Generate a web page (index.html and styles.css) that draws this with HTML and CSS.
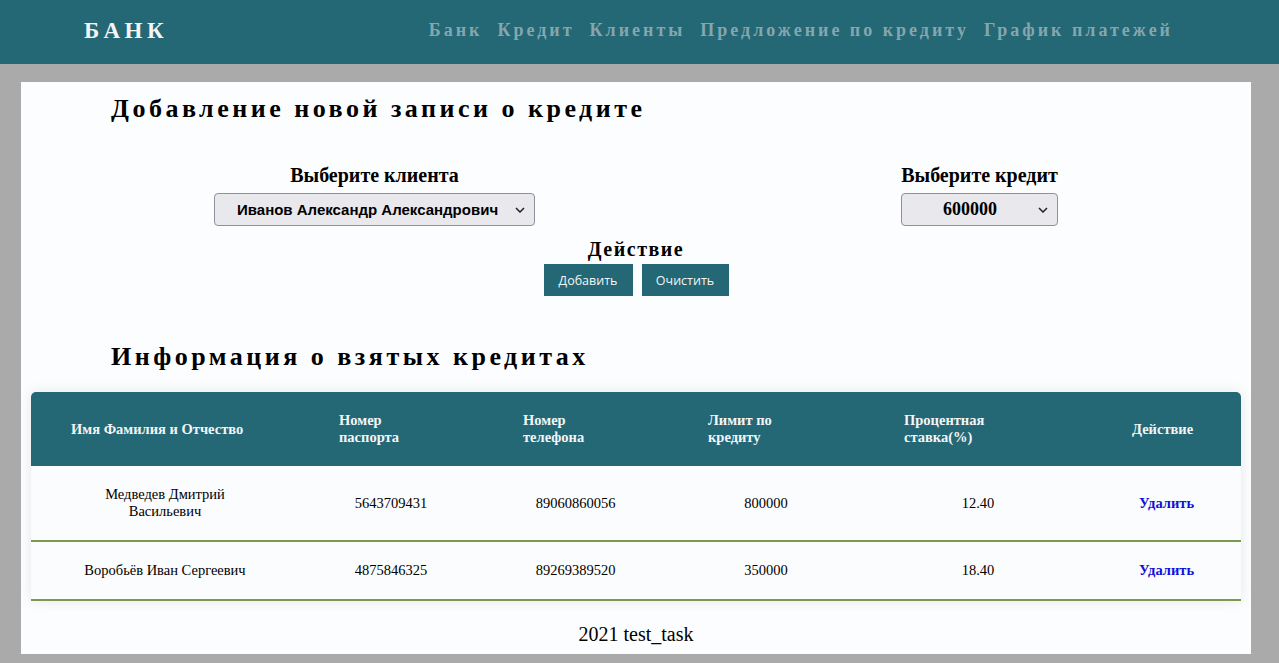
FILE: index.html
```html
<!DOCTYPE html>
<html lang="ru">
<head>
<meta charset="utf-8">
<title>Банк</title>
<link rel="stylesheet" href="styles.css">
</head>
<body>
<header class="topbar">
  <div class="brand">БАНК</div>
  <nav class="nav">
    <a href="#">Банк</a>
    <a href="#">Кредит</a>
    <a href="#">Клиенты</a>
    <a href="#">Предложение по кредиту</a>
    <a href="#">График платежей</a>
  </nav>
</header>
<main class="page">
  <h2 class="title">Добавление новой записи о кредите</h2>
  <div class="form-row">
    <div class="field">
      <div class="label">Выберите клиента</div>
      <div class="select select-client">
        <span class="select-text sans">Иванов Александр Александрович</span>
        <svg class="chev" width="10" height="6" viewBox="0 0 10 6"><path d="M1 1l4 4 4-4" fill="none" stroke="#222" stroke-width="1.5"/></svg>
      </div>
    </div>
    <div class="field">
      <div class="label">Выберите кредит</div>
      <div class="select select-credit">
        <span class="select-text serif">600000</span>
        <svg class="chev" width="10" height="6" viewBox="0 0 10 6"><path d="M1 1l4 4 4-4" fill="none" stroke="#222" stroke-width="1.5"/></svg>
      </div>
    </div>
  </div>
  <div class="actions">
    <div class="label label-action">Действие</div>
    <div class="btns">
      <button class="btn btn-add">Добавить</button>
      <button class="btn btn-clear">Очистить</button>
    </div>
  </div>
  <h2 class="title title-info">Информация о взятых кредитах</h2>
  <table class="credits">
    <colgroup>
      <col class="c1"><col class="c2"><col class="c3"><col class="c4"><col class="c5"><col class="c6">
    </colgroup>
    <thead>
      <tr>
        <th>Имя Фамилия и Отчество</th>
        <th>Номер паспорта</th>
        <th>Номер телефона</th>
        <th>Лимит по кредиту</th>
        <th>Процентная ставка(%)</th>
        <th>Действие</th>
      </tr>
    </thead>
    <tbody>
      <tr>
        <td>Медведев Дмитрий Васильевич</td>
        <td>5643709431</td>
        <td>89060860056</td>
        <td>800000</td>
        <td>12.40</td>
        <td><a class="del" href="#">Удалить</a></td>
      </tr>
      <tr>
        <td>Воробьёв Иван Сергеевич</td>
        <td>4875846325</td>
        <td>89269389520</td>
        <td>350000</td>
        <td>18.40</td>
        <td><a class="del" href="#">Удалить</a></td>
      </tr>
    </tbody>
  </table>
  <footer class="foot">2021 test_task</footer>
</main>
</body>
</html>
```
FILE: styles.css
```css
* { box-sizing: border-box; }
html, body { margin: 0; padding: 0; }
body {
  background: #aaaaaa;
  font-family: "Liberation Serif", "Times New Roman", serif;
  color: #000;
  height: 663px;
  overflow: hidden;
}
.topbar {
  height: 64px;
  background: #246775;
  display: flex;
  align-items: center;
  justify-content: space-between;
  padding: 0 106px 0 84px;
}
.brand {
  color: #f2f4f5;
  font-weight: bold;
  font-size: 23px;
  letter-spacing: 4.5px;
  margin-top: -3px;
}
.nav {
  display: flex;
  gap: 15px;
  margin-top: -3px;
}
.nav a {
  color: #86a6ae;
  text-decoration: none;
  font-weight: bold;
  font-size: 18px;
  letter-spacing: 3px;
}
.page {
  margin: 18px 28px 0 21px;
  background: #fcfdff;
  padding: 12px 10px 10px;
  height: 572px;
}
.title {
  margin: 0 0 0 80px;
  font-size: 26px;
  line-height: 30px;
  letter-spacing: 3.5px;
  font-weight: bold;
}
.form-row {
  display: flex;
  justify-content: space-around;
  margin-top: 40px;
}
.field {
  display: flex;
  flex-direction: column;
  align-items: center;
}
.label {
  font-weight: bold;
  font-size: 20px;
  line-height: 22px;
  text-align: center;
}
.label-action { letter-spacing: 1.5px; }
.select {
  margin-top: 7px;
  height: 33px;
  background: #e9e8ed;
  border: 1px solid #8f8f9d;
  border-radius: 4px;
  display: flex;
  align-items: center;
  position: relative;
}
.select-client { width: 321px; padding-left: 22px; }
.select-credit { width: 157px; justify-content: center; padding-right: 19px; }
.select-text { font-weight: bold; }
.select-text.sans { font-family: "Liberation Sans", Arial, sans-serif; font-size: 15px; }
.select-text.serif { font-size: 18px; }
.chev { position: absolute; right: 9px; top: 13px; }
.actions {
  margin-top: 12px;
  display: flex;
  flex-direction: column;
  align-items: center;
}
.btns {
  display: flex;
  gap: 9px;
  margin-top: 4px;
}
.btn {
  height: 32px;
  border: none;
  background: #246775;
  color: #f4f6f7;
  font-family: "Open Sans", "Liberation Sans", sans-serif;
  font-size: 12.5px;
  padding: 0;
}
.btn-add { width: 89px; }
.btn-clear { width: 87px; }
.title-info { margin-top: 46px; }
.credits {
  margin-top: 20px;
  width: 1210px;
  border-collapse: separate;
  border-spacing: 0;
  table-layout: fixed;
  box-shadow: 0 0 14px rgba(0,0,0,0.09);
  border-radius: 5px 5px 0 0;
}
.c1 { width: 268px; }
.c2 { width: 184px; }
.c3 { width: 185px; }
.c4 { width: 196px; }
.c5 { width: 228px; }
.c6 { width: 149px; }
.credits th {
  background: #246775;
  color: #f3f5f6;
  font-size: 14.5px;
  line-height: 17px;
  font-weight: bold;
  text-align: left;
  padding: 20px 50px 20px 40px;
  height: 74px;
}
.credits th:last-child { padding-right: 20px; }
.credits th:first-child { border-top-left-radius: 5px; }
.credits th:last-child { border-top-right-radius: 5px; }
.credits td {
  font-size: 14.5px;
  line-height: 17px;
  text-align: center;
  padding: 20px 40px;
  border-bottom: 2px solid #78994e;
  background: #fbfcfe;
}
.del {
  color: #1010d8;
  font-weight: bold;
  text-decoration: none;
}
.foot {
  margin-top: 23px;
  text-align: center;
  font-size: 20px;
  line-height: 21px;
}
```
